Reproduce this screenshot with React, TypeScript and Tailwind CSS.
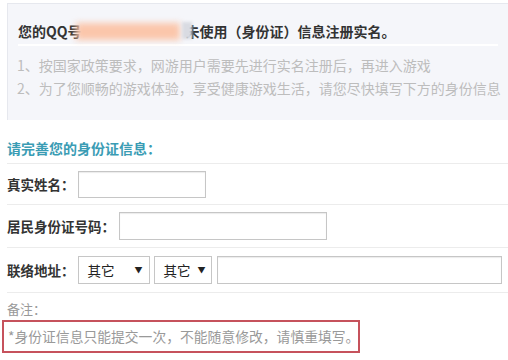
import React from "react";

export default function App() {
  const tips = [
    "1、按国家政策要求，网游用户需要先进行实名注册后，再进入游戏",
    "2、为了您顺畅的游戏体验，享受健康游戏生活，请您尽快填写下方的身份信息",
  ];

  return (
    <div className="w-[508px] h-[360px] overflow-hidden bg-white font-['Noto_Sans_CJK_SC','Noto_Sans',sans-serif]">
      {/* Notice box */}
      <div className="mt-[3px] ml-[7px] h-[117px] bg-[#f5f6fa] border-l border-t border-[#e6e8ee]">
        <div className="mx-[10px] pt-[17px] pb-[3px] border-b-2 border-white text-[14px] leading-[20px] font-bold text-[#333] flex items-center">
          <span>您的QQ号</span>
          <span className="relative inline-block w-[104px] h-[20px]">
            <span className="absolute left-[-6px] top-[2px] w-[104px] h-[17px] bg-[#fbc6ab] blur-[3px]" />
          </span>
          <span className="relative">
            <span className="absolute z-10 left-[-4px] top-[1px] w-[10px] h-[17px] bg-[#d9dbe2] blur-[1.5px]" />
            未使用（身份证）信息注册实名。
          </span>
        </div>
        <div className="pl-[9px] pt-[8px] text-[14px] leading-[23px] text-[#bdbdbd]">
          {tips.map((t) => (
            <div key={t} className="whitespace-nowrap">{t}</div>
          ))}
        </div>
      </div>

      {/* Form */}
      <div className="pl-[7px]">
        <div className="pt-[18px] pb-[5px] border-b border-[#ececec] text-[14px] leading-[20px] font-bold text-[#3a9cb4]">
          请完善您的身份证信息：
        </div>

        <div className="h-[41px] flex items-center border-b border-[#ececec]">
          <span className="text-[13.5px] font-bold text-[#333]">真实姓名：</span>
          <input className="ml-[3px] w-[128px] h-[27px] border border-[#c6c6c6] bg-white outline-none shadow-[inset_0_1px_1px_rgba(0,0,0,0.08)]" />
        </div>

        <div className="h-[43px] flex items-center border-b border-[#ececec]">
          <span className="text-[13.5px] font-bold text-[#333]">居民身份证号码：</span>
          <input className="ml-[4px] w-[208px] h-[28px] border border-[#c6c6c6] bg-white outline-none shadow-[inset_0_1px_1px_rgba(0,0,0,0.08)]" />
        </div>

        <div className="h-[45px] flex items-center border-b border-[#ececec]">
          <span className="text-[13.5px] font-bold text-[#333]">联络地址：</span>
          <div className="ml-[3px] w-[72px] h-[28px] border border-[#c6c6c6] flex items-center justify-between pl-[9px] pr-[6px] text-[13.5px] text-[#222]">
            <span>其它</span>
            <span className="text-[8px]">▼</span>
          </div>
          <div className="ml-[4px] w-[58px] h-[28px] border border-[#c6c6c6] flex items-center justify-between pl-[9px] pr-[5px] text-[13.5px] text-[#222]">
            <span>其它</span>
            <span className="text-[8px]">▼</span>
          </div>
          <input className="ml-[5px] w-[285px] h-[28px] border border-[#c6c6c6] bg-white outline-none shadow-[inset_0_1px_1px_rgba(0,0,0,0.08)]" />
        </div>

        <div className="pt-[6px] text-[13px] leading-[20px] text-[#999]">备注：</div>
        <div className="-ml-[5px] mt-[1px] w-[358px] h-[33px] border-2 border-[#c6525c] flex items-center pl-[4px] text-[13.8px] text-[#999] whitespace-nowrap">
          *身份证信息只能提交一次，不能随意修改，请慎重填写。
        </div>
      </div>
    </div>
  );
}
